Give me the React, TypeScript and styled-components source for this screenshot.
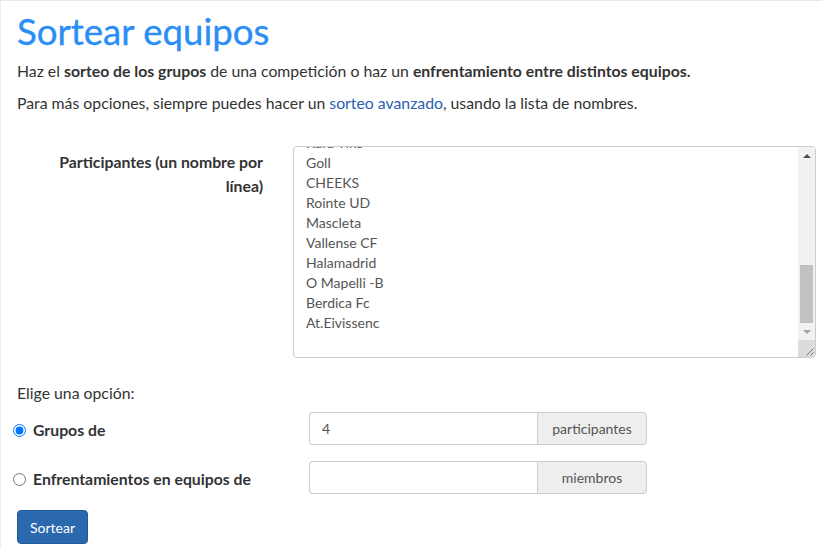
import styled, { createGlobalStyle } from "styled-components";
import { FC, useEffect, useRef, useState } from "react";

const GlobalStyle = createGlobalStyle`
  html, body {
    margin: 0;
    padding: 0;
    background: #fff;
  }
  body {
    font-family: Lato, "Open Sans", sans-serif;
    font-size: 15.8px;
    line-height: 1.42857;
    color: #333;
  }
  * { box-sizing: border-box; }
`;

const Page = styled.div`
  min-height: 548px;
  border-top: 1px solid #e8e8e8;
  border-left: 1px solid #ededed;
  padding: 0 6px 0 16px;
`;

const Title = styled.h1`
  margin: 10px 0 9px;
  font-size: 36.6px;
  font-weight: 400;
  line-height: 1.1;
  color: #2a8ef6;
  -webkit-text-stroke: 0.35px #2a8ef6;
`;

const Lead = styled.p`
  margin: 0 0 10.5px;
  line-height: 21.4px;
  b { font-weight: 700; }
`;

const Link = styled.a`
  color: #2a60b3;
  text-decoration: none;
`;

const Form = styled.form`
  padding-top: 22px;
  display: flex;
  flex-direction: column;
`;

const FieldRow = styled.div`
  display: grid;
  grid-template-columns: 246px 1fr;
  column-gap: 30px;
`;

const FieldLabel = styled.label`
  text-align: right;
  font-weight: 700;
  line-height: 24px;
  padding: 4px 0 0 12px;
`;

const AreaBox = styled.div`
  position: relative;
  height: 212px;
`;

const Names = styled.textarea`
  display: block;
  width: 100%;
  height: 100%;
  padding: 6px 29px 6px 12px;
  border: 1px solid #ccc;
  border-radius: 4px;
  font-family: Lato, "Open Sans", sans-serif;
  font-size: 14px;
  line-height: 20px;
  color: #555;
  resize: none;
  overflow-y: hidden;
  outline: none;
`;

const ScrollBar = styled.div`
  position: absolute;
  top: 1px;
  right: 1px;
  bottom: 1px;
  width: 17px;
  display: flex;
  flex-direction: column;
  background: #f1f1f1;
  border-radius: 0 3px 3px 0;
  overflow: hidden;
`;

const ScrollArrow = styled.div<{ $up?: boolean; $active?: boolean }>`
  height: 17px;
  display: flex;
  align-items: center;
  justify-content: center;
  &::before {
    content: "";
    border-left: 4px solid transparent;
    border-right: 4px solid transparent;
    ${p => (p.$up ? "border-bottom" : "border-top")}: 4px solid ${p => (p.$active ? "#505050" : "#a3a3a3")};
  }
`;

const Track = styled.div`
  flex: 1;
  display: flex;
  flex-direction: column;
  justify-content: flex-end;
  padding: 0 2px;
`;

const Thumb = styled.div`
  height: 58px;
  background: #c1c1c1;
`;

const Corner = styled.div`
  height: 17px;
  background: #dcdcdc;
  display: flex;
  align-items: flex-end;
  justify-content: flex-end;
  svg { display: block; }
`;

const Prompt = styled.div`
  margin: 24px 0 9px;
  line-height: 21px;
`;

const OptionRow = styled.div`
  display: grid;
  grid-template-columns: 292px 338px;
  align-items: center;
  margin-bottom: 16px;
`;

const OptionLabel = styled.label`
  display: flex;
  align-items: center;
  gap: 7px;
  font-weight: 700;
  padding-top: 3px;
  input {
    margin: 0 0 0 -4px;
    width: 13px;
    height: 13px;
  }
`;

const InputGroup = styled.div`
  display: flex;
  height: 33px;
`;

const NumberInput = styled.input`
  flex: 1;
  min-width: 0;
  border: 1px solid #ccc;
  border-right: none;
  border-radius: 4px 0 0 4px;
  padding: 6px 12px;
  font-family: Lato, "Open Sans", sans-serif;
  font-size: 14px;
  color: #555;
  outline: none;
`;

const Addon = styled.span<{ $width: number }>`
  width: ${p => p.$width}px;
  display: flex;
  align-items: center;
  justify-content: center;
  background: #eee;
  border: 1px solid #ccc;
  border-radius: 0 4px 4px 0;
  font-size: 14px;
  color: #555;
`;

const Submit = styled.button`
  align-self: flex-start;
  height: 34px;
  padding: 0 12px;
  background: #2b69ae;
  border: 1px solid #245a96;
  border-radius: 4px;
  color: #fff;
  font-family: Lato, "Open Sans", sans-serif;
  font-size: 14px;
  cursor: pointer;
`;

const teams = [
  "Real Cantera", "Atlético Ribera", "Los Galácticos", "CD Montaña", "Deportivo Sur",
  "Rayo Norte", "Unión Vecinal", "Sporting Barrio", "Olímpica FC", "Racing Playa",
  "Los Tigres", "Club Estrella", "Peña Azul", "Leones CF", "Inter Plaza",
  "Juventud UD", "Ciudad Jardín", "Águilas FC", "Celtic Mar", "Dinamo Sierra",
  "Veteranos CF", "Torre Alta", "Athletic Río", "Kara Tins", "Goll", "CHEEKS",
  "Rointe UD", "Mascleta", "Vallense CF", "Halamadrid", "O Mapelli -B",
  "Berdica Fc", "At.Eivissenc",
];

const App: FC = () => {
  const areaRef = useRef<HTMLTextAreaElement>(null);
  const [mode, setMode] = useState("grupos");

  useEffect(() => {
    const el = areaRef.current;
    if (el) el.scrollTop = el.scrollHeight - el.clientHeight - 2;
  }, []);

  return (
    <>
      <GlobalStyle />
      <Page>
        <Title>Sortear equipos</Title>
        <Lead>
          Haz el <b>sorteo de los grupos</b> de una competición o haz un <b>enfrentamiento entre distintos equipos.</b>
        </Lead>
        <Lead>
          Para más opciones, siempre puedes hacer un <Link href="#">sorteo avanzado</Link>, usando la lista de nombres.
        </Lead>
        <Form onSubmit={e => e.preventDefault()}>
          <FieldRow>
            <FieldLabel htmlFor="names">Participantes (un nombre por línea)</FieldLabel>
            <AreaBox>
              <Names id="names" ref={areaRef} spellCheck={false} defaultValue={teams.join("\n") + "\n"} />
              <ScrollBar aria-hidden>
                <ScrollArrow $up $active />
                <Track>
                  <Thumb />
                </Track>
                <ScrollArrow />
                <Corner>
                  <svg width="17" height="17" viewBox="0 0 17 17">
                    <path d="M15.5 8.5l-7 7M15.5 12.5l-3 3" stroke="#777" strokeWidth="1" />
                  </svg>
                </Corner>
              </ScrollBar>
            </AreaBox>
          </FieldRow>
          <Prompt>Elige una opción:</Prompt>
          <OptionRow>
            <OptionLabel>
              <input type="radio" name="mode" checked={mode === "grupos"} onChange={() => setMode("grupos")} />
              Grupos de
            </OptionLabel>
            <InputGroup>
              <NumberInput defaultValue="4" />
              <Addon $width={110}>participantes</Addon>
            </InputGroup>
          </OptionRow>
          <OptionRow>
            <OptionLabel>
              <input type="radio" name="mode" checked={mode === "equipos"} onChange={() => setMode("equipos")} />
              Enfrentamientos en equipos de
            </OptionLabel>
            <InputGroup>
              <NumberInput />
              <Addon $width={110}>miembros</Addon>
            </InputGroup>
          </OptionRow>
          <Submit type="submit">Sortear</Submit>
        </Form>
      </Page>
    </>
  );
};

export default App;
